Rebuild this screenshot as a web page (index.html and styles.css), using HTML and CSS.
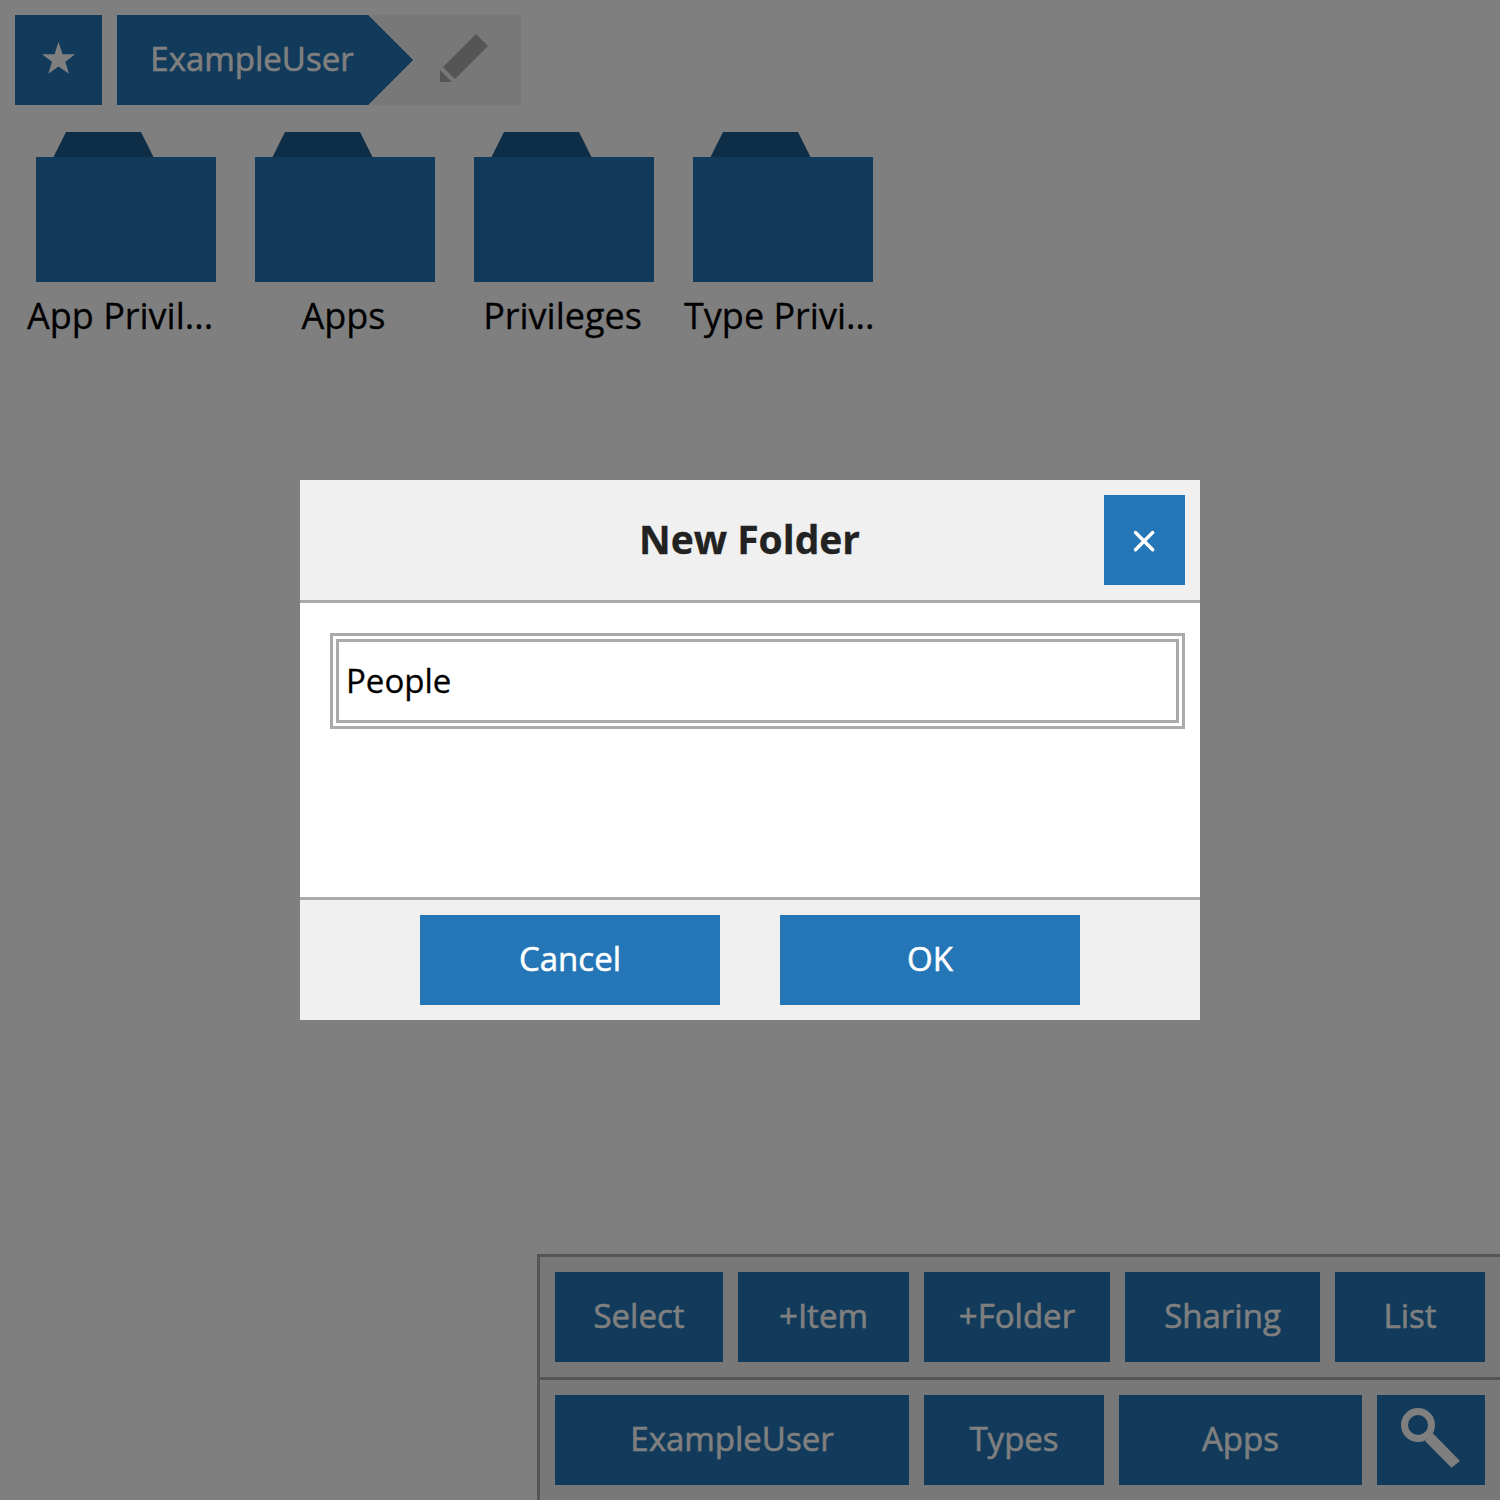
FILE: index.html
```html
<!DOCTYPE html>
<html lang="en">
<head>
<meta charset="utf-8">
<title>New Folder</title>
<link rel="stylesheet" href="styles.css">
</head>
<body>
<div class="app">
  <header class="path">
    <button class="btn star" aria-label="Favourites"><svg width="87" height="90" viewBox="0 0 87 90"><path d="M43.5 27L47.6 39.3H60L50.3 46.8L54 58.8L43.5 51.5L33.3 58.8L37 46.8L27 39.3H39.5Z" fill="#fff"/></svg></button>
    <div class="crumbs">
      <button class="crumb">ExampleUser</button>
      <button class="edit" aria-label="Edit">
        <svg width="153" height="90" viewBox="0 0 153 90"><path d="M0 0H2.2L47.2 45L2.2 90H0Z" fill="#fff"/><path d="M0 0H.3L45.3 45L.3 90H0Z" fill="#2576b7"/><path d="M108 19L120 31L87 64L75 52ZM72 55L84 67H72Z" fill="#aaa"/></svg>
      </button>
    </div>
  </header>
  <main class="folders">
    <div class="folder"><svg width="180" height="150" viewBox="0 0 180 150"><path d="M17.5 25L30 0H105L117.5 25Z" fill="#1c5c91"/><path d="M0 25H180V150H0Z" fill="#2576b7"/></svg><span class="name">App Privil...</span></div>
    <div class="folder"><svg width="180" height="150" viewBox="0 0 180 150"><path d="M17.5 25L30 0H105L117.5 25Z" fill="#1c5c91"/><path d="M0 25H180V150H0Z" fill="#2576b7"/></svg><span class="name">Apps</span></div>
    <div class="folder"><svg width="180" height="150" viewBox="0 0 180 150"><path d="M17.5 25L30 0H105L117.5 25Z" fill="#1c5c91"/><path d="M0 25H180V150H0Z" fill="#2576b7"/></svg><span class="name">Privileges</span></div>
    <div class="folder"><svg width="180" height="150" viewBox="0 0 180 150"><path d="M17.5 25L30 0H105L117.5 25Z" fill="#1c5c91"/><path d="M0 25H180V150H0Z" fill="#2576b7"/></svg><span class="name">Type Privi...</span></div>
  </main>
  <footer class="tools">
    <div class="row actions">
      <button class="btn">Select</button>
      <button class="btn">+Item</button>
      <button class="btn">+Folder</button>
      <button class="btn">Sharing</button>
      <button class="btn">List</button>
    </div>
    <div class="row places">
      <button class="btn">ExampleUser</button>
      <button class="btn">Types</button>
      <button class="btn">Apps</button>
      <button class="btn" aria-label="Search"><svg width="108" height="90" viewBox="0 0 108 90"><circle cx="41" cy="30" r="13.5" fill="none" stroke="#fff" stroke-width="7"/><path d="M56 38.5L83 66L74.5 72.7L48 46Z" fill="#fff"/></svg></button>
    </div>
  </footer>
</div>
<div class="overlay">
  <section class="dialog">
    <header class="dialog-head">
      <h1 class="title">New Folder</h1>
      <button class="btn close" aria-label="Close"><svg width="81" height="90" viewBox="0 0 81 90"><path d="M31.5 37.5L48.7 54.7M48.7 37.5L31.5 54.7" stroke="#fff" stroke-width="3.4" stroke-linecap="round"/></svg></button>
    </header>
    <div class="dialog-body"><input class="field" type="text" value="People"></div>
    <footer class="dialog-foot">
      <button class="btn">Cancel</button>
      <button class="btn">OK</button>
    </footer>
  </section>
</div>
</body>
</html>
```

FILE: styles.css
```css
* { box-sizing: border-box; }
body {
  margin: 0;
  height: 1500px;
  overflow: hidden;
  background: #fff;
  color: #000;
  font-family: "Open Sans", sans-serif;
  font-size: 33px;
}
svg { display: block; }
button {
  border: 0;
  padding: 0;
  font: inherit;
}
.app {
  height: 1500px;
  display: flex;
  flex-direction: column;
}
.btn {
  height: 90px;
  padding-bottom: 4px;
  background: #2576b7;
  color: #fff;
  -webkit-text-stroke: 0.5px #fff;
}
.btn:has(svg) { padding: 0; }
.path {
  display: flex;
  gap: 15px;
  padding: 15px;
}
.star { width: 87px; }
.crumbs { display: flex; }
.crumb {
  width: 251px;
  height: 90px;
  padding: 0 0 4px 19px;
  background: #2576b7;
  color: #fff;
  -webkit-text-stroke: 0.5px #fff;
}
.edit { background: #f0f0f0; }
.folders {
  display: flex;
  flex: 1;
  padding: 12px 0 0 27px;
}
.folder { width: 219px; }
.folder svg { margin-left: 9px; }
.name {
  display: flex;
  justify-content: center;
  width: 195px;
  margin-top: 9px;
  font-size: 36px;
  line-height: 50px;
  white-space: nowrap;
  -webkit-text-stroke: 0.3px #000;
}
.folder:first-child .name { justify-content: flex-start; }
.folder:last-child .name { justify-content: flex-start; }
.tools {
  align-self: flex-end;
  width: 963px;
  border-left: 3px solid #aaa;
  background: #f0f0f0;
}
.row {
  display: grid;
  gap: 15px;
  padding: 15px;
  border-top: 3px solid #aaa;
}
.actions { grid-template-columns: 168px 171px 186px 195px 150px; }
.places { grid-template-columns: 354px 180px 243px 108px; }
.overlay {
  position: absolute;
  inset: 0;
  display: grid;
  place-items: center;
  background: rgba(0, 0, 0, 0.5);
}
.dialog {
  display: flex;
  flex-direction: column;
  width: 900px;
  height: 540px;
  background: #fff;
}
.dialog-head {
  display: flex;
  align-items: center;
  padding: 15px;
  border-bottom: 3px solid #aaa;
  background: #f0f0f0;
}
.title {
  flex: 1;
  height: 90px;
  margin: 0;
  padding-left: 80px;
  color: #222;
  font-size: 39px;
  line-height: 88px;
  text-align: center;
  -webkit-text-stroke: 0.3px #222;
}
.close { width: 81px; }
.dialog-body {
  flex: 1;
  padding: 30px 15px 0 30px;
}
.field {
  display: block;
  width: 855px;
  height: 96px;
  padding: 0 7px 2px;
  border: 9px double #aaa;
  outline: 0;
  background: #fff;
  color: #000;
  font: inherit;
  -webkit-text-stroke: 0.3px #000;
}
.dialog-foot {
  display: grid;
  grid-template-columns: 300px 300px;
  justify-content: center;
  gap: 60px;
  padding: 15px;
  border-top: 3px solid #aaa;
  background: #f0f0f0;
}
```
